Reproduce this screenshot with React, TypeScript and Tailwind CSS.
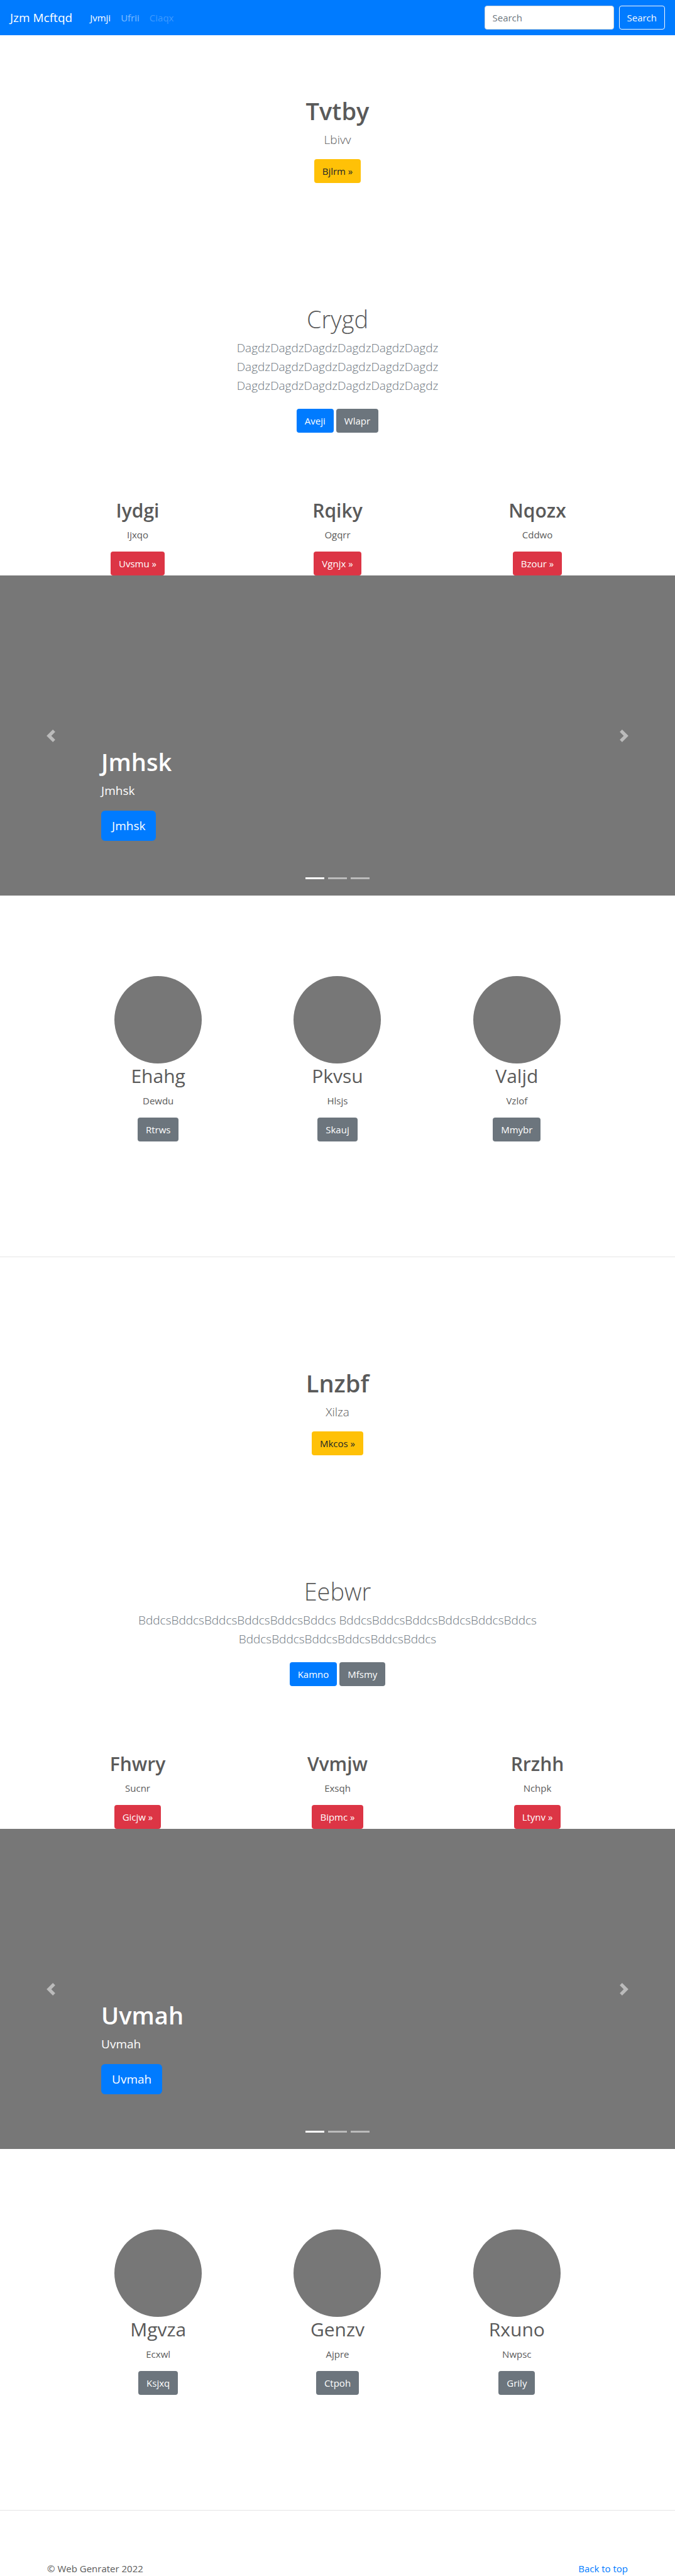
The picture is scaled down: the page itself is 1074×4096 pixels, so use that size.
import type { ReactNode } from 'react';

const tones = {
  primary: 'bg-[#007bff] text-white',
  secondary: 'bg-[#6c757d] text-white',
  warning: 'bg-[#ffc107] text-[#212529]',
  danger: 'bg-[#dc3545] text-white',
};

function Button({ tone, children }: { tone: keyof typeof tones; children: ReactNode }) {
  return (
    <button type="button" className={`h-[38px] rounded px-[13px] text-[15px] leading-6 ${tones[tone]}`}>
      {children}
    </button>
  );
}

function Hero({ title, text, action }: { title: string; text: string; action: string }) {
  return (
    <section className="flex flex-col items-center pb-24 text-center">
      <h1 className="mb-[7px] text-[38px] leading-[48px] font-semibold">{title}</h1>
      <p className="mb-4 text-[19px] leading-[30px] font-light">{text}</p>
      <Button tone="warning">{action}</Button>
    </section>
  );
}

function Album({ title, text, actions }: { title: string; text: string; actions: [string, string] }) {
  return (
    <section className="flex flex-col items-center pt-24 text-center">
      <h1 className="mb-[7px] text-[38px] leading-[48px] font-light">{title}</h1>
      <p className="mb-[22px] max-w-[641px] text-[19px] leading-[30px] font-light text-[#6c757d]">{text}</p>
      <div className="flex gap-1">
        <Button tone="primary">{actions[0]}</Button>
        <Button tone="secondary">{actions[1]}</Button>
      </div>
    </section>
  );
}

type Item = { title: string; text: string; action: string };

function Features({ items }: { items: Item[] }) {
  return (
    <section className="grid grid-cols-3 px-[60px] pt-[105px] text-center">
      {items.map((item) => (
        <div key={item.title} className="flex flex-col items-center">
          <h2 className="mb-[7px] text-[30px] leading-[38px] font-semibold">{item.title}</h2>
          <p className="mb-[15px] text-[15px] leading-6">{item.text}</p>
          <Button tone="danger">{item.action} »</Button>
        </div>
      ))}
    </section>
  );
}

function Carousel({ label }: { label: string }) {
  return (
    <section className="relative flex h-[509px] flex-col items-start justify-end bg-[#777] px-[15%] pb-[87px] text-white">
      <h1 className="mb-[7px] text-[38px] leading-[48px] font-semibold">{label}</h1>
      <p className="mb-[17px] text-[19px] leading-[30px]">{label}</p>
      <button type="button" className="h-12 rounded-md bg-[#007bff] px-[17px] text-[19px] leading-[30px]">
        {label}
      </button>
      <button
        type="button"
        aria-label="Previous"
        className="absolute inset-y-0 left-0 flex w-[15%] items-center justify-center opacity-50"
      >
        <svg viewBox="0 0 8 8" className="size-5 fill-white">
          <path d="M5.25 0l-4 4 4 4 1.5-1.5-2.5-2.5 2.5-2.5-1.5-1.5z" />
        </svg>
      </button>
      <button
        type="button"
        aria-label="Next"
        className="absolute inset-y-0 right-0 flex w-[15%] items-center justify-center opacity-50"
      >
        <svg viewBox="0 0 8 8" className="size-5 fill-white">
          <path d="M2.75 0l-1.5 1.5 2.5 2.5-2.5 2.5 1.5 1.5 4-4-4-4z" />
        </svg>
      </button>
      <div className="absolute inset-x-[15%] bottom-[26px] flex justify-center gap-1.5">
        <button type="button" aria-label="Slide 1" className="h-[3px] w-[30px] bg-white" />
        <button type="button" aria-label="Slide 2" className="h-[3px] w-[30px] bg-white/50" />
        <button type="button" aria-label="Slide 3" className="h-[3px] w-[30px] bg-white/50" />
      </div>
    </section>
  );
}

function Profiles({ items }: { items: Item[] }) {
  return (
    <section className="grid grid-cols-3 px-[109px] pt-32 pb-[183px] text-center">
      {items.map((item) => (
        <div key={item.title} className="flex flex-col items-center">
          <div className="mb-px size-[139px] rounded-full bg-[#777]" />
          <h2 className="mb-2 text-[30px] leading-[38px] font-normal">{item.title}</h2>
          <p className="mb-[15px] text-[15px] leading-6">{item.text}</p>
          <Button tone="secondary">{item.action}</Button>
        </div>
      ))}
    </section>
  );
}

export default function App() {
  return (
    <div className="bg-white font-['Open_Sans','Noto_Sans',sans-serif] text-[15px] text-[#5a5a5a]">
      <nav className="flex h-14 items-center bg-[#007bff] px-4 text-white">
        <a href="#" className="mr-7 text-[19px] leading-[30px]">Jzm Mcftqd</a>
        <div className="flex gap-4 leading-6">
          <a href="#">Jvmji</a>
          <a href="#" className="text-white/50">Ufrii</a>
          <a href="#" className="text-white/25">Ciaqx</a>
        </div>
        <form className="ml-auto flex gap-2">
          <input
            type="text"
            aria-label="Search"
            placeholder="Search"
            className="h-[38px] w-[206px] rounded border border-[#ced4da] bg-white px-3 leading-6 text-[#495057] placeholder:text-[#6c757d]"
          />
          <button type="button" className="h-[38px] rounded border border-[#f8f9fa] px-3 leading-6 text-[#f8f9fa]">
            Search
          </button>
        </form>
      </nav>

      <main>
        <div className="pt-24">
          <Hero title="Tvtby" text="Lbivv" action="Bjlrm »" />
        </div>
        <Album
          title="Crygd"
          text="DagdzDagdzDagdzDagdzDagdzDagdz DagdzDagdzDagdzDagdzDagdzDagdz DagdzDagdzDagdzDagdzDagdzDagdz"
          actions={['Aveji', 'Wlapr']}
        />
        <Features
          items={[
            { title: 'Iydgi', text: 'Ijxqo', action: 'Uvsmu' },
            { title: 'Rqiky', text: 'Ogqrr', action: 'Vgnjx' },
            { title: 'Nqozx', text: 'Cddwo', action: 'Bzour' },
          ]}
        />
        <Carousel label="Jmhsk" />
        <Profiles
          items={[
            { title: 'Ehahg', text: 'Dewdu', action: 'Rtrws' },
            { title: 'Pkvsu', text: 'Hlsjs', action: 'Skauj' },
            { title: 'Valjd', text: 'Vzlof', action: 'Mmybr' },
          ]}
        />
        <hr className="border-black/10" />

        <div className="pt-44">
          <Hero title="Lnzbf" text="Xilza" action="Mkcos »" />
        </div>
        <Album
          title="Eebwr"
          text="BddcsBddcsBddcsBddcsBddcsBddcs BddcsBddcsBddcsBddcsBddcsBddcs BddcsBddcsBddcsBddcsBddcsBddcs"
          actions={['Kamno', 'Mfsmy']}
        />
        <Features
          items={[
            { title: 'Fhwry', text: 'Sucnr', action: 'Gicjw' },
            { title: 'Vvmjw', text: 'Exsqh', action: 'Bipmc' },
            { title: 'Rrzhh', text: 'Nchpk', action: 'Ltynv' },
          ]}
        />
        <Carousel label="Uvmah" />
        <Profiles
          items={[
            { title: 'Mgvza', text: 'Ecxwl', action: 'Ksjxq' },
            { title: 'Genzv', text: 'Ajpre', action: 'Ctpoh' },
            { title: 'Rxuno', text: 'Nwpsc', action: 'Grily' },
          ]}
        />
        <hr className="border-black/10" />
      </main>

      <footer className="flex justify-between px-[75px] pt-20 leading-6">
        <p>© Web Genrater 2022</p>
        <a href="#" className="text-[#007bff]">Back to top</a>
      </footer>
    </div>
  );
}
